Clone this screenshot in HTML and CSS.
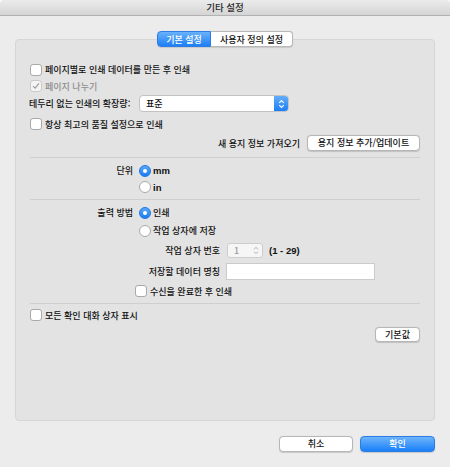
FILE: index.html
```html
<!DOCTYPE html>
<html lang="ko">
<head>
<meta charset="utf-8">
<link rel="stylesheet" href="styles.css">
</head>
<body>
<div class="window">
  <div class="titlebar">기타 설정</div>
  <div class="main">
    <div class="tabs">
      <div class="tab active">기본 설정</div>
      <div class="tab">사용자 정의 설정</div>
    </div>
    <div class="box">
      <div class="row r-a"><span class="cb"></span><span>페이지별로 인쇄 데이터를 만든 후 인쇄</span></div>
      <div class="row r-b disabled"><span class="cb checked"><svg viewBox="0 0 12 12" width="10" height="10"><path d="M2.5 6.2 L5 8.6 L9.6 2.8" fill="none" stroke="#9a9a9a" stroke-width="1.3"/></svg></span><span>페이지 나누기</span></div>
      <div class="row r-c"><span class="lbl">테두리 없는 인쇄의 확장량:</span>
        <div class="select"><span class="sel-text">표준</span><span class="sel-arrow"><svg viewBox="0 0 12 16" width="9" height="12"><path d="M3 6.5 L6 3.5 L9 6.5 M3 9.5 L6 12.5 L9 9.5" fill="none" stroke="#fff" stroke-width="1.5"/></svg></span></div>
      </div>
      <div class="row r-d"><span class="cb"></span><span>항상 최고의 품질 설정으로 인쇄</span></div>
      <div class="row r-e"><span>새 용지 정보 가져오기</span><button class="btn wide">용지 정보 추가/업데이트</button></div>
      <div class="sep s1"></div>
      <div class="row r-f"><span class="col-l">단위</span><span class="radio on"></span><span class="latin">mm</span></div>
      <div class="row r-g"><span class="col-l"></span><span class="radio"></span><span class="latin">in</span></div>
      <div class="sep s2"></div>
      <div class="row r-h"><span class="col-l">출력 방법</span><span class="radio on"></span><span>인쇄</span></div>
      <div class="row r-i"><span class="col-l"></span><span class="radio"></span><span>작업 상자에 저장</span></div>
      <div class="row r-j"><span class="col-l"></span><span class="col-m">작업 상자 번호</span>
        <div class="stepper"><span>1</span><svg viewBox="0 0 10 14" width="8" height="11"><path d="M2.5 5.5 L5 3 L7.5 5.5 M2.5 8.5 L5 11 L7.5 8.5" fill="none" stroke="#a8a8a8" stroke-width="1.2"/></svg></div>
        <span class="latin range">(1 - 29)</span></div>
      <div class="row r-k"><span class="col-l"></span><span class="col-m">저장할 데이터 명칭</span><div class="input"></div></div>
      <div class="row r-l"><span class="col-l"></span><span class="cb"></span><span>수신을 완료한 후 인쇄</span></div>
      <div class="sep s3"></div>
      <div class="row r-m"><span class="cb"></span><span>모든 확인 대화 상자 표시</span></div>
      <div class="row r-n"><button class="btn small">기본값</button></div>
    </div>
    <div class="footer">
      <button class="btn cancel">취소</button>
      <button class="btn ok">확인</button>
    </div>
  </div>
</div>
</body>
</html>
```
FILE: styles.css
```css
* { box-sizing: border-box; }
html, body { margin: 0; padding: 0; }
body {
  width: 450px;
  height: 467px;
  background: #ffffff;
  font-family: "Noto Sans CJK KR", "Liberation Sans", sans-serif;
  font-size: 9px;
  font-weight: 500;
  color: #111;
  overflow: hidden;
}
.window {
  width: 450px;
  height: 467px;
  background: #ececec;
  border-radius: 4px 4px 0 0;
  overflow: hidden;
}
.titlebar {
  height: 16px;
  background: linear-gradient(#ebebeb, #d5d5d5);
  border-bottom: 1px solid #b2b2b2;
  text-align: center;
  line-height: 15px;
  font-size: 9.5px;
  color: #2a2a2a;
}
.main {
  padding: 0 15px;
}
.tabs {
  margin-top: 15px;
  display: flex;
  justify-content: center;
  position: relative;
  z-index: 1;
  height: 16px;
}
.tab {
  height: 16px;
  line-height: 15px;
  background: #fff;
  border: 1px solid #b9b9b9;
  border-left: none;
  border-radius: 0 4px 4px 0;
  width: 82px;
  text-align: center;
  font-size: 9px;
  box-shadow: 0 0.5px 1px rgba(0,0,0,0.12);
}
.tab.active {
  width: 54px;
  border: 1px solid #2c7de8;
  border-radius: 4px 0 0 4px;
  background: linear-gradient(#69b1fa, #1d7ff5);
  color: #fff;
}
.box {
  margin-top: -8px;
  height: 382px;
  background: #e3e3e3;
  border: 1px solid #d6d6d6;
  border-radius: 4px;
  padding: 21px 14px 0 13px;
}
.row {
  display: flex;
  align-items: center;
  white-space: nowrap;
}
.r-a { height: 17px; }
.r-b { height: 16px; }
.r-c { height: 19px; }
.r-d { height: 22px; }
.r-e { height: 16px; justify-content: flex-end; gap: 7px; }
.r-f { height: 17px; }
.r-g { height: 16px; }
.r-h { height: 17px; }
.r-i { height: 19px; }
.r-j { height: 20px; }
.r-k { height: 22px; }
.r-l { height: 18px; }
.r-m { height: 16px; }
.r-n { height: 15px; margin-top: 4px; justify-content: flex-end; }
.sep { height: 1px; background: #cfcfcf; margin-left: 1px; }
.s1 { margin-top: 6px; margin-bottom: 4px; }
.s2 { margin-top: 4px; margin-bottom: 4px; }
.s3 { margin-top: 3px; margin-bottom: 3px; }
.cb {
  width: 12px;
  height: 12px;
  background: #fff;
  border: 1px solid #a9a9a9;
  border-radius: 3px;
  margin: 0 3px 0 1px;
  display: flex;
  align-items: center;
  justify-content: center;
  flex: none;
}
.disabled { color: #8d8d8d; }
.cb.checked { border-color: #cacaca; background: #f4f4f4; }
.lbl { width: 105px; }
.select {
  width: 150px;
  height: 17px;
  background: #fff;
  border: 1px solid #c2c2c2;
  border-radius: 4px;
  display: flex;
  align-items: center;
  margin-left: 5px;
  overflow: hidden;
}
.sel-text { flex: 1; padding-left: 6px; }
.sel-arrow {
  width: 14px;
  height: 100%;
  background: linear-gradient(#63adf9, #1d7ff5);
  display: flex;
  align-items: center;
  justify-content: center;
}
.btn {
  font-family: "Noto Sans CJK KR", "Liberation Sans", sans-serif;
  font-size: 9px;
  font-weight: 500;
  color: #111;
  background: #fff;
  border: 1px solid #b6b6b6;
  border-radius: 4px;
  height: 16px;
  padding: 0;
  line-height: 14px;
  box-shadow: 0 0.5px 1px rgba(0,0,0,0.15);
}
.btn.wide { width: 113px; }
.btn.small { width: 45px; height: 15px; line-height: 13px; }
.col-l { width: 105px; text-align: right; padding-right: 1px; flex: none; }
.radio {
  width: 12px;
  height: 12px;
  border-radius: 50%;
  background: #fff;
  border: 1px solid #a9a9a9;
  margin: 0 2px 0 5px;
  flex: none;
  display: flex;
  align-items: center;
  justify-content: center;
}
.radio.on {
  border: 1px solid #1b76e8;
  background: linear-gradient(#5aa8f8, #1a7cf4);
}
.radio.on::after {
  content: "";
  width: 4px;
  height: 4px;
  border-radius: 50%;
  background: #fff;
}
.latin { font-family: "Liberation Sans", sans-serif; font-weight: bold; font-size: 9.5px; }
.col-m { width: 80px; margin-left: 6px; text-align: right; flex: none; }
.stepper {
  margin-left: 7px;
  width: 36px;
  height: 15px;
  background: #f6f6f6;
  border: 1px solid #cdcdcd;
  border-radius: 3px;
  display: flex;
  align-items: center;
  justify-content: space-between;
  padding: 0 2px 0 6px;
  color: #9a9a9a;
}
.range { margin-left: 6px; }
.input {
  margin-left: 6px;
  width: 149px;
  height: 17px;
  background: #fff;
  border: 1px solid #cbcbcb;
}
.footer {
  display: flex;
  justify-content: flex-end;
  gap: 7px;
  margin-top: 15px;
}
.btn.cancel { width: 74px; }
.btn.ok {
  width: 75px;
  color: #fff;
  border: 1px solid #2b7ce3;
  background: linear-gradient(#6eb4fb, #1a80f8);
}
```
